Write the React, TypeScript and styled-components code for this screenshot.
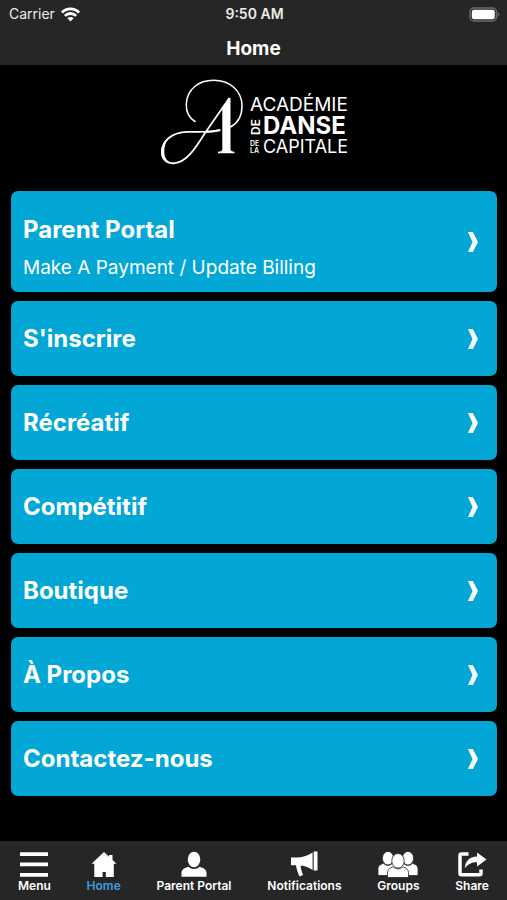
import React from "react";
import styled, { createGlobalStyle } from "styled-components";

const GlobalStyle = createGlobalStyle`
  * { box-sizing: border-box; }
  body {
    margin: 0;
    background: #000;
    color: #fff;
    font-family: Inter, "Liberation Sans", sans-serif;
  }
`;

const Screen = styled.div`
  display: flex;
  flex-direction: column;
  min-height: 100vh;
`;

const Header = styled.header`
  background: #262626;
  padding-bottom: 3px;
`;

const StatusBar = styled.div`
  display: grid;
  grid-template-columns: 1fr auto 1fr;
  align-items: center;
  height: 28px;
  padding: 0 7px 0 9px;
  font-size: 14px;
  line-height: 20px;
  color: #ececec;
`;

const Carrier = styled.div`
  display: flex;
  align-items: center;
  gap: 6px;
`;

const Time = styled.time`
  font-weight: 600;
`;

const BatterySlot = styled.div`
  display: flex;
  justify-content: flex-end;
`;

const PageTitle = styled.h1`
  margin: 0;
  padding-top: 8px;
  font-size: 19px;
  line-height: 26px;
  font-weight: 700;
  text-align: center;
`;

const Main = styled.main`
  flex: 1;
  padding: 13px 10px 16px 11px;
`;

const LogoSlot = styled.div`
  display: flex;
  justify-content: center;
  padding-bottom: 25px;
`;

const CardList = styled.ul`
  display: flex;
  flex-direction: column;
  gap: 9px;
  margin: 0;
  padding: 0;
  list-style: none;
`;

const Card = styled.a<{ $tall?: boolean }>`
  display: flex;
  align-items: center;
  justify-content: space-between;
  min-height: ${(p) => (p.$tall ? 101 : 75)}px;
  padding: 0 19px 0 12px;
  border-radius: 7px;
  background: #02a7d5;
  color: #fff;
  text-decoration: none;
`;

const CardText = styled.span<{ $tall?: boolean }>`
  display: flex;
  flex-direction: column;
  gap: 11px;
  padding-top: ${(p) => (p.$tall ? 12 : 0)}px;
`;

const CardTitle = styled.span`
  font-size: 24px;
  line-height: 30px;
  font-weight: 700;
`;

const CardNote = styled.span`
  font-size: 19px;
  line-height: 24px;
`;

const TabBar = styled.nav`
  position: sticky;
  bottom: 0;
  display: flex;
  justify-content: space-between;
  height: 59px;
  padding: 9px 18px 0;
  background: #262626;
`;

const Tab = styled.button<{ $active?: boolean }>`
  display: flex;
  flex-direction: column;
  align-items: center;
  padding: 0;
  border: 0;
  background: none;
  color: ${(p) => (p.$active ? "#3b9fdf" : "#fff")};
  font: 600 12px/16px Inter, "Liberation Sans", sans-serif;
  white-space: nowrap;
  cursor: pointer;

  svg {
    fill: #fff;
  }
`;

const Wifi = () => (
  <svg width="19" height="15" viewBox="0 0 19 15" fill="none" stroke="#fff" strokeWidth="2.8" aria-hidden="true">
    <path d="M1 5.6C5.7 .6 13.3 .6 18 5.6" />
    <path d="M3.9 8.9C7 5.7 12 5.7 15.1 8.9" />
    <path d="M6.4 11.2C8.3 9.5 10.7 9.5 12.6 11.2L9.5 14.4Z" fill="#fff" stroke="none" />
  </svg>
);

const Battery = () => (
  <svg width="31" height="15" viewBox="0 0 31 15" aria-hidden="true">
    <rect x="1" y="1" width="26.5" height="13" rx="4" fill="none" stroke="#6b6b6b" strokeWidth="1.5" />
    <rect x="2.8" y="2.8" width="23" height="9.4" rx="2.2" fill="#fff" />
    <path d="M28.8 5.2C30.9 6 30.9 9 28.8 9.8Z" fill="#6b6b6b" />
  </svg>
);

const Chevron = () => (
  <svg width="10" height="20" viewBox="0 0 10 20" fill="#fff" aria-hidden="true">
    <path d="M0 0H4.8L10 10L4.8 20H0L4.5 10Z" />
  </svg>
);

const Logo = () => (
  <svg width="188" height="88" viewBox="160 78 188 88" role="img" aria-label="Académie de danse de la capitale">
    <g fill="none" stroke="#fff" strokeLinecap="round">
      <path d="M195 121.5C188 117 186 110 186.3 104C187 89 199 80.3 213.5 80.3C230 80.3 242 91 242 106C242 115 238 123 230.5 127" strokeWidth="1.5" />
      <path d="M229 98.5L205 133C195 149 186 163.3 173 163.3" strokeWidth="1.7" />
      <path d="M219.5 130C212 132.5 202 131.8 187 131.8C172 131.8 161.8 142 161.8 152C161.8 159 166 163.3 173 163.3" strokeWidth="1.7" />
      <path d="M219.5 130.3C214 131.7 210 132 204 132" strokeWidth="2.2" />
    </g>
    <path d="M229 98H230.5V149C230.5 151 232 151.3 234.5 151.7V153.3H218V151.7C221 151.3 222.3 151 222.3 149V108Z" fill="#fff" />
    <path d="M171 135C162 141 160 150 162 156C164 161 168 163.5 173 163.5C167 161.5 164.3 158 164.3 152C164.3 145 167 139 171 135Z" fill="#fff" />
    <g fill="#fff" fontFamily="Inter, sans-serif">
      <text x="250" y="111" fontSize="19">ACADÉMIE</text>
      <text x="263" y="134" fontSize="24" fontWeight="700">DANSE</text>
      <text x="263" y="153" fontSize="18">CAPITALE</text>
      <text transform="translate(260 135) rotate(-90)" fontSize="12" fontWeight="600">DE</text>
      <text x="250" y="146" fontSize="7" fontWeight="600">DE</text>
      <text x="250" y="153" fontSize="7" fontWeight="600">LA</text>
    </g>
  </svg>
);

const MenuIcon = () => (
  <svg width="30" height="28" viewBox="0 0 30 28" aria-hidden="true">
    <path d="M1 2.2H29V6H1ZM1 12.5H29V16.3H1ZM1 22.9H29V26.7H1Z" />
  </svg>
);

const HomeIcon = () => (
  <svg width="26" height="28" viewBox="0 0 26 28" aria-hidden="true">
    <path d="M13 2L18 6.7V5H21.5V10L25.5 13.7H22.8V27H14.8V22H11.6V27H3.3V13.7H.5Z" />
  </svg>
);

const PersonIcon = () => (
  <svg width="26" height="28" viewBox="0 0 26 28" aria-hidden="true">
    <ellipse cx="13" cy="9.5" rx="6.3" ry="7.7" />
    <path d="M.5 26.8V23C.5 19.5 3.5 17.7 7.5 16.7C10.5 19.7 15.5 19.7 18.5 16.7C22.5 17.7 25.5 19.5 25.5 23V26.8Z" />
  </svg>
);

const MegaphoneIcon = () => (
  <svg width="28" height="28" viewBox="0 0 28 28" aria-hidden="true">
    <path d="M1 7.5H8C13 7.3 18 5.5 22.6 2.5V20C18.5 17.5 15 16 10.7 15.5C10.7 18 11.3 20.5 13 25L9.5 26.5C8 23 6.5 19.5 6 15.2H1Z" />
    <path d="M23.7 1.5H27.5V20.5H23.7Z" />
  </svg>
);

const GroupIcon = () => (
  <svg width="40" height="28" viewBox="0 0 40 28" aria-hidden="true">
    <g stroke="#262626" strokeWidth=".8">
      <path d="M0 25.5V18.5C0 16 2 14.5 5.5 13.3C8 16 12 16 14.5 13.3L20 15V25.5Z" />
      <path d="M40 25.5V18.5C40 16 38 14.5 34.5 13.3C32 16 28 16 25.5 13.3L20 15V25.5Z" />
      <ellipse cx="10" cy="8.2" rx="5.6" ry="6.8" />
      <ellipse cx="30" cy="8.2" rx="5.6" ry="6.8" />
      <path d="M9.5 27.5V22.5C9.5 19.5 12 17.8 15 16.8C18 19.5 22 19.5 25 16.8C28 17.8 30.5 19.5 30.5 22.5V27.5Z" />
      <ellipse cx="20" cy="10.8" rx="6.2" ry="7.3" />
    </g>
  </svg>
);

const ShareIcon = () => (
  <svg width="30" height="28" viewBox="0 0 30 28" aria-hidden="true">
    <path d="M11.5 4H4.5Q3 4 3 5.5V23.3Q3 24.8 4.5 24.8H22.5Q24 24.8 24 23.3V19.5" fill="none" stroke="#fff" strokeWidth="3.5" />
    <path d="M20 2.5L29.5 9.5L20 16.5V12.3C14.5 12.3 11 14 7.8 18.3C8.3 11.5 12 6.7 20 6.5Z" />
  </svg>
);

const links = [
  { title: "Parent Portal", note: "Make A Payment / Update Billing" },
  { title: "S'inscrire" },
  { title: "Récréatif" },
  { title: "Compétitif" },
  { title: "Boutique" },
  { title: "À Propos" },
  { title: "Contactez-nous" },
];

const tabs = [
  { label: "Menu", Icon: MenuIcon },
  { label: "Home", Icon: HomeIcon, active: true },
  { label: "Parent Portal", Icon: PersonIcon },
  { label: "Notifications", Icon: MegaphoneIcon },
  { label: "Groups", Icon: GroupIcon },
  { label: "Share", Icon: ShareIcon },
];

export default function App() {
  return (
    <Screen>
      <GlobalStyle />
      <Header>
        <StatusBar>
          <Carrier>
            Carrier
            <Wifi />
          </Carrier>
          <Time>9:50 AM</Time>
          <BatterySlot>
            <Battery />
          </BatterySlot>
        </StatusBar>
        <PageTitle>Home</PageTitle>
      </Header>
      <Main>
        <LogoSlot>
          <Logo />
        </LogoSlot>
        <CardList>
          {links.map(({ title, note }) => (
            <li key={title}>
              <Card href="#" $tall={Boolean(note)}>
                <CardText $tall={Boolean(note)}>
                  <CardTitle>{title}</CardTitle>
                  {note && <CardNote>{note}</CardNote>}
                </CardText>
                <Chevron />
              </Card>
            </li>
          ))}
        </CardList>
      </Main>
      <TabBar>
        {tabs.map(({ label, Icon, active }) => (
          <Tab key={label} type="button" $active={active} aria-current={active ? "page" : undefined}>
            <Icon />
            {label}
          </Tab>
        ))}
      </TabBar>
    </Screen>
  );
}
